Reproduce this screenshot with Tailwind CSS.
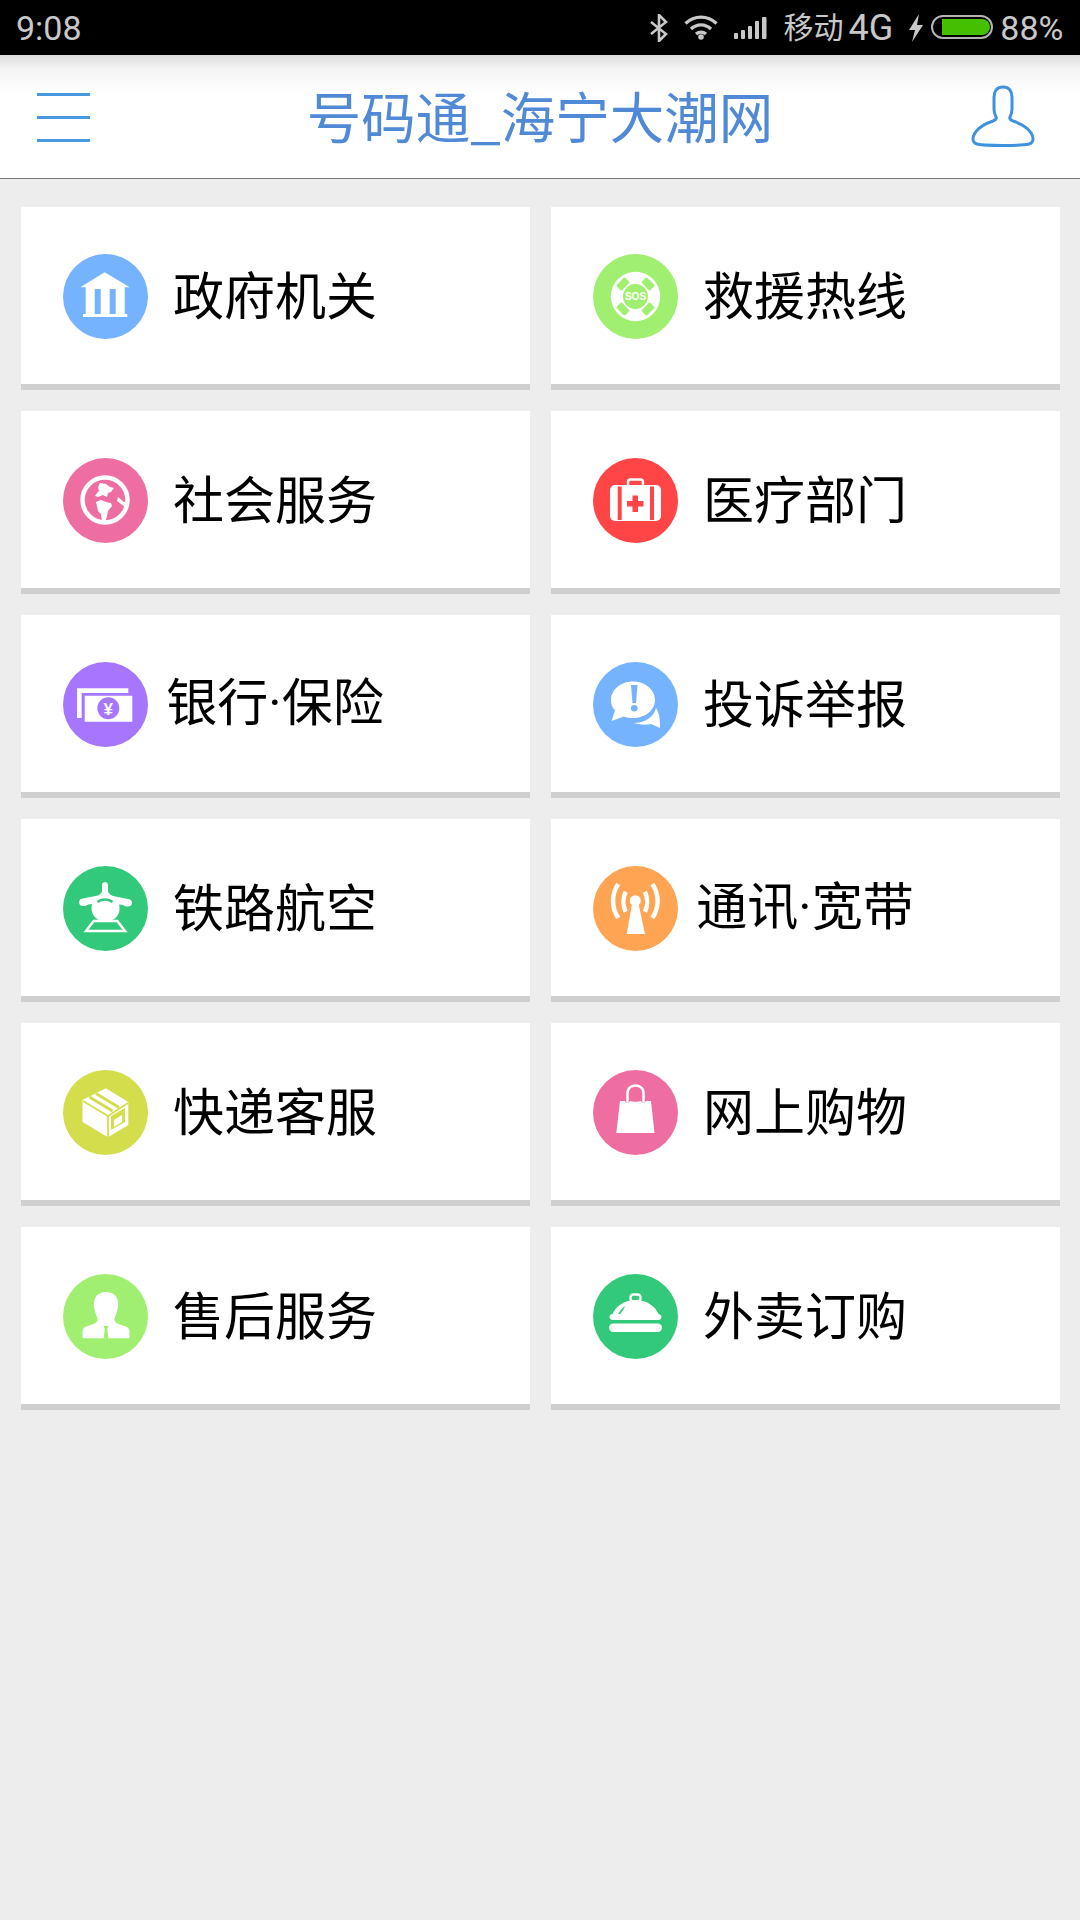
<!DOCTYPE html>
<html lang="zh">
<head>
    <meta charset="UTF-8">
    <meta name="viewport" content="width=device-width, initial-scale=1.0">
    <title>号码通_海宁大潮网</title>
    <script src="https://cdn.jsdelivr.net/npm/@tailwindcss/browser@4"></script>
</head>
<body class="w-[1080px] h-[1920px] bg-[#ededed] font-['Noto_Sans_CJK_SC','Liberation_Sans',sans-serif]">

    <!-- status bar -->
    <div class="h-[55px] bg-black flex items-center text-[#c8c8c8] font-['Roboto','Noto_Sans_CJK_SC',sans-serif] text-[34px] leading-none">
        <span class="ml-[16px]">9:08</span>
        <svg class="ml-[568px] w-[18px] h-[28px]" viewBox="0 0 18 28" fill="none" stroke="#c8c8c8" stroke-width="2.6"><path d="M1 8l15 12-7 7V1l7 7L1 20"/></svg>
        <svg class="ml-[16px] w-[34px] h-[25px]" viewBox="0 0 34 25" fill="none" stroke="#c8c8c8" stroke-width="3.400"><path d="M1.500 8.500c9-8.500 22-8.500 31 0M7 14c6-5.500 14-5.500 20 0M12 19c3-2.500 7-2.500 10 0"/><circle cx="17" cy="22" r="2.800" fill="#c8c8c8" stroke="none"/></svg>
        <svg class="ml-[16px] w-[34px] h-[24px]" viewBox="0 0 34 24" fill="#c8c8c8"><rect x="0" y="17" width="4" height="6" rx="1"/><rect x="7" y="14" width="4" height="9" rx="1"/><rect x="14" y="10" width="4" height="13" rx="1"/><rect x="21" y="5" width="4" height="18" rx="1"/><rect x="28" y="1" width="4.500" height="22" rx="1"/></svg>
        <span class="ml-[16px] text-[30px]">移动</span>
        <span class="ml-[5px] text-[36px]">4G</span>
        <svg class="ml-[15px] w-[16px] h-[28px]" viewBox="0 0 16 28" fill="#c8c8c8"><path d="M11 0L1 16h6l-3 12L15 11H9z"/></svg>
        <svg class="ml-[7px] w-[62px] h-[25px]" viewBox="0 0 62 25"><rect x="1" y="1" width="60" height="22" rx="11" fill="none" stroke="#b4b4b4" stroke-width="2"/><path d="M11 4h40a8 8 0 0 1 0 16H11z" fill="#44c000"/></svg>
        <span class="ml-[7px]">88%</span>
    </div>

    <!-- header -->
    <header class="h-[124px] border-b border-[#777] bg-[linear-gradient(#dcdcdc,#f4f4f4_14px,#fff_40px)] flex items-center justify-between">
        <div class="ml-[37px] w-[53px] h-[50px] flex flex-col justify-between pt-[1px]">
            <div class="h-[3px] bg-[#4a98e0]"></div>
            <div class="h-[3px] bg-[#4a98e0]"></div>
            <div class="h-[3px] bg-[#4a98e0]"></div>
        </div>
        <h1 class="ml-[20px] pb-[2px] text-[#5089d6] text-[54.500px] leading-none font-normal">号码通_海宁大潮网</h1>
        <svg class="mr-[44px] w-[66px] h-[64px]" viewBox="0 0 66 64" fill="none" stroke="#3f92de" stroke-width="3"><path d="M33 2c-6 0-9 4-9 10v12c0 4 1 6 2 8 1 2-1 3-3 4C11 40 3 47 3 54c0 3 1 4 4 5 8 2 44 2 52 0 3-1 4-2 4-5 0-7-8-14-20-18-2-1-4-2-3-4 1-2 2-4 2-8V12c0-6-3-10-9-10z"/></svg>
    </header>

    <!-- menu grid -->
    <main class="grid grid-cols-[509px_509px] gap-x-[21px] gap-y-[21px] pl-[21px] pt-[28px] text-black text-[51px] leading-none">

        <a class="h-[183px] bg-white border-b-[6px] border-[#cfcfcf] flex items-center pl-[42px] pt-[1px]">
            <svg class="w-[85px] h-[85px]" viewBox="0 0 85 85"><circle cx="42.500" cy="42.500" r="42.500" fill="#75b3ff"/><path d="M41.700 18.300L66.700 33.300H17.300z M22.700 33H61.700V60H22.700z M20 60H64.300V63H20z" fill="#fff"/><path d="M31.700 35H37.700V60H31.700z M46.700 35H52.700V60H46.700z" fill="#75b3ff"/></svg>
            <span class="w-[254px] pb-[6px] text-center whitespace-nowrap">政府机关</span>
        </a>
        <a class="h-[183px] bg-white border-b-[6px] border-[#cfcfcf] flex items-center pl-[42px] pt-[1px]">
            <svg class="w-[85px] h-[85px]" viewBox="0 0 85 85"><circle cx="42.500" cy="42.500" r="42.500" fill="#a1ef70"/><circle cx="42.500" cy="42.500" r="24.700" fill="#fff"/><circle cx="42.500" cy="42.500" r="12.500" fill="#a1ef70"/><g fill="#a1ef70"><rect x="36.500" y="21" width="12" height="7.500" rx="1" transform="rotate(-45 42.500 42.500)"/><rect x="36.500" y="21" width="12" height="7.500" rx="1" transform="rotate(45 42.500 42.500)"/><rect x="36.500" y="21" width="12" height="7.500" rx="1" transform="rotate(135 42.500 42.500)"/><rect x="36.500" y="21" width="12" height="7.500" rx="1" transform="rotate(225 42.500 42.500)"/></g><text x="42.500" y="46" text-anchor="middle" fill="#fff" font-size="10" font-weight="700" font-family="Liberation Sans">SOS</text></svg>
            <span class="w-[254px] pb-[6px] text-center whitespace-nowrap">救援热线</span>
        </a>

        <a class="h-[183px] bg-white border-b-[6px] border-[#cfcfcf] flex items-center pl-[42px] pt-[1px]">
            <svg class="w-[85px] h-[85px]" viewBox="0 0 85 85"><circle cx="42.500" cy="42.500" r="42.500" fill="#ee6ea2"/><circle cx="42" cy="42" r="22.500" fill="none" stroke="#fff" stroke-width="4.500"/><path d="M37 25l6 1 4 3 4 1-3 4-3 1-1 4-4-2-5 2-3-1 2-3 2-2-1-4zM33 44l5-2 5 2 5 1 1 3-4 5-1 5-2 7-3-1-1-8-3-3-1-5zM55 39l6 5 5 0-4 5-4-3-4-3z" fill="#fff"/></svg>
            <span class="w-[254px] pb-[6px] text-center whitespace-nowrap">社会服务</span>
        </a>
        <a class="h-[183px] bg-white border-b-[6px] border-[#cfcfcf] flex items-center pl-[42px] pt-[1px]">
            <svg class="w-[85px] h-[85px]" viewBox="0 0 85 85"><circle cx="42.500" cy="42.500" r="42.500" fill="#ff4545"/><rect x="35" y="21.500" width="15" height="7" rx="2.500" fill="none" stroke="#fff" stroke-width="2.400"/><rect x="17" y="27" width="51" height="36" rx="5" fill="#fff"/><path d="M24.700 28.500h4V62h-4zM57 28.500h4V62h-4z" fill="#ff4545"/><path d="M39.500 37.500h5.500v5.500h5.500v5.500H45V54h-5.500v-5.500H34V43h5.500z" fill="#ff4545"/></svg>
            <span class="w-[254px] pb-[6px] text-center whitespace-nowrap">医疗部门</span>
        </a>

        <a class="h-[183px] bg-white border-b-[6px] border-[#cfcfcf] flex items-center pl-[42px] pt-[1px]">
            <svg class="w-[85px] h-[85px]" viewBox="0 0 85 85"><circle cx="42.500" cy="42.500" r="42.500" fill="#a776ff"/><path d="M14 26.300H65.300V31H18.700V56H14z M21.700 33.700H69.300V59.700H21.700z" fill="#fff"/><circle cx="45.300" cy="46.300" r="11" fill="#a776ff"/><text x="45.300" y="52.500" text-anchor="middle" fill="#fff" font-size="17" font-weight="700" font-family="Liberation Sans">¥</text></svg>
            <span class="w-[254px] pb-[6px] text-center whitespace-nowrap">银行<span class="font-['Roboto']">·</span>保险</span>
        </a>
        <a class="h-[183px] bg-white border-b-[6px] border-[#cfcfcf] flex items-center pl-[42px] pt-[1px]">
            <svg class="w-[85px] h-[85px]" viewBox="0 0 85 85"><circle cx="42.500" cy="42.500" r="42.500" fill="#75b3ff"/><path d="M63 46c4 6 4 13 4 20l-9-4c-5 1-11 1-17-1 10 0 20-6 22-15z" fill="#fff"/><path d="M40 19.500c12.500 0 22 8.500 22 18.500S52.500 56 40 56c-3.500 0-6-.500-9-1.500l-12.500 4.500 3.500-10.500c-2.800-3-4-6.500-4-10.500 0-10 9.500-18.500 22-18.500z" fill="#fff"/><path d="M38 23h6.500l-1.500 18h-3.500z" fill="#75b3ff"/><circle cx="41.300" cy="46.300" r="3.300" fill="#75b3ff"/></svg>
            <span class="w-[254px] pb-[6px] text-center whitespace-nowrap">投诉举报</span>
        </a>

        <a class="h-[183px] bg-white border-b-[6px] border-[#cfcfcf] flex items-center pl-[42px] pt-[1px]">
            <svg class="w-[85px] h-[85px]" viewBox="0 0 85 85"><circle cx="42.500" cy="42.500" r="42.500" fill="#33c97a"/><path d="M39 19c0-4 6-4 6 0v7c1.500 2 3 3 5 4l15 3c3 .500 4 1.500 4 4s-2 3.500-4 3.500c-2 0-3.500-.500-5-1.500l-4-.500c.500 1.500 .500 3 .500 4.500 0 7-6 12.500-14 12.500S28.500 49.500 28.500 42.500c0-1.500 0-3 .500-4.500l-4 .500c-1.500 1-3 1.500-5 1.500s-4-1-4-3.500 1-3.500 4-4l15-3c2-1 3-2 4-4z" fill="#fff"/><path d="M34.500 36c4-3.500 11-3.500 15 0" fill="none" stroke="#33c97a" stroke-width="2.500"/><path d="M30.700 55H54.300L62 65H23z" fill="none" stroke="#fff" stroke-width="2.500"/></svg>
            <span class="w-[254px] pb-[6px] text-center whitespace-nowrap">铁路航空</span>
        </a>
        <a class="h-[183px] bg-white border-b-[6px] border-[#cfcfcf] flex items-center pl-[42px] pt-[1px]">
            <svg class="w-[85px] h-[85px]" viewBox="0 0 85 85"><circle cx="42.500" cy="42.500" r="42.500" fill="#ffa452"/><circle cx="42.300" cy="34.700" r="5.500" fill="#fff"/><path d="M39 38h6.600L52 68H33.700z" fill="#fff"/><g fill="none" stroke="#fff" stroke-width="4.500"><path d="M32.700 25.700c-3 6-3 14 0 20"/><path d="M25.300 18c-7 10-7 24 0 34"/><path d="M51.900 25.700c3 6 3 14 0 20"/><path d="M59.300 18c7 10 7 24 0 34"/></g></svg>
            <span class="w-[254px] pb-[6px] text-center whitespace-nowrap">通讯<span class="font-['Roboto']">·</span>宽带</span>
        </a>

        <a class="h-[183px] bg-white border-b-[6px] border-[#cfcfcf] flex items-center pl-[42px] pt-[1px]">
            <svg class="w-[85px] h-[85px]" viewBox="0 0 85 85"><circle cx="42.500" cy="42.500" r="42.500" fill="#d4dd4c"/><path d="M42.800 18.300L65.300 32V55L45 67.300 19.500 52V30z" fill="#fff"/><g fill="none" stroke="#d4dd4c" stroke-width="1.800"><path d="M20 31l25 15 20-13M45 46v21"/><path d="M26.500 27l23 14M33 23.500l23 14" stroke-width="3"/></g><path d="M48 46l14-8v14l-14 8z" fill="#d4dd4c"/><path d="M51 50l8-5v7l-8 5z" fill="#fff"/></svg>
            <span class="w-[254px] pb-[6px] text-center whitespace-nowrap">快递客服</span>
        </a>
        <a class="h-[183px] bg-white border-b-[6px] border-[#cfcfcf] flex items-center pl-[42px] pt-[1px]">
            <svg class="w-[85px] h-[85px]" viewBox="0 0 85 85"><circle cx="42.500" cy="42.500" r="42.500" fill="#ee6ea2"/><path d="M34.500 32V23c0-10 16-10 16 0v9" fill="none" stroke="#fff" stroke-width="2.500"/><path d="M32 31c1 2 4 2 5 0 3 1 8 1 11 0 1 2 4 2 5 0h5l3.500 32H23.300L27 31z" fill="#fff"/></svg>
            <span class="w-[254px] pb-[6px] text-center whitespace-nowrap">网上购物</span>
        </a>

        <a class="h-[183px] bg-white border-b-[6px] border-[#cfcfcf] flex items-center pl-[42px] pt-[1px]">
            <svg class="w-[85px] h-[85px]" viewBox="0 0 85 85"><circle cx="42.500" cy="42.500" r="42.500" fill="#a1ef70"/><path d="M42.800 18c-8 0-12 5.500-12 12 0 5 2 10 3.500 14 1 3-1 5-4 6l-7 2.500c-3 1-3.800 3-3.800 6V64.300h47V58.500c0-3-.800-5-3.800-6l-7-2.500c-3-1-5-3-4-6 1.500-4 3.500-9 3.500-14 0-6.500-4-12-12-12z" fill="#fff"/><path d="M40.500 52h5l-1.200 3 1 9.500h-4.600l1-9.500z" fill="#a1ef70"/></svg>
            <span class="w-[254px] pb-[6px] text-center whitespace-nowrap">售后服务</span>
        </a>
        <a class="h-[183px] bg-white border-b-[6px] border-[#cfcfcf] flex items-center pl-[42px] pt-[1px]">
            <svg class="w-[85px] h-[85px]" viewBox="0 0 85 85"><circle cx="42.500" cy="42.500" r="42.500" fill="#33c97a"/><rect x="37.500" y="20.500" width="10" height="7" rx="3" fill="none" stroke="#fff" stroke-width="2.400"/><path d="M42.500 26c12 0 20 7 23 14 2 .500 3 1.500 3 3s-1 3-3 3H19.500c-2 0-3-1.500-3-3s1-3 3-3c3-7 11-14 23-14z" fill="#fff"/><path d="M25 40c2-3 4-6 7-8-1 3-3 6-5 8z" fill="#33c97a"/><rect x="16" y="49.500" width="53" height="8.500" rx="4.200" fill="#fff"/></svg>
            <span class="w-[254px] pb-[6px] text-center whitespace-nowrap">外卖订购</span>
        </a>
    </main>
</body>
</html>
